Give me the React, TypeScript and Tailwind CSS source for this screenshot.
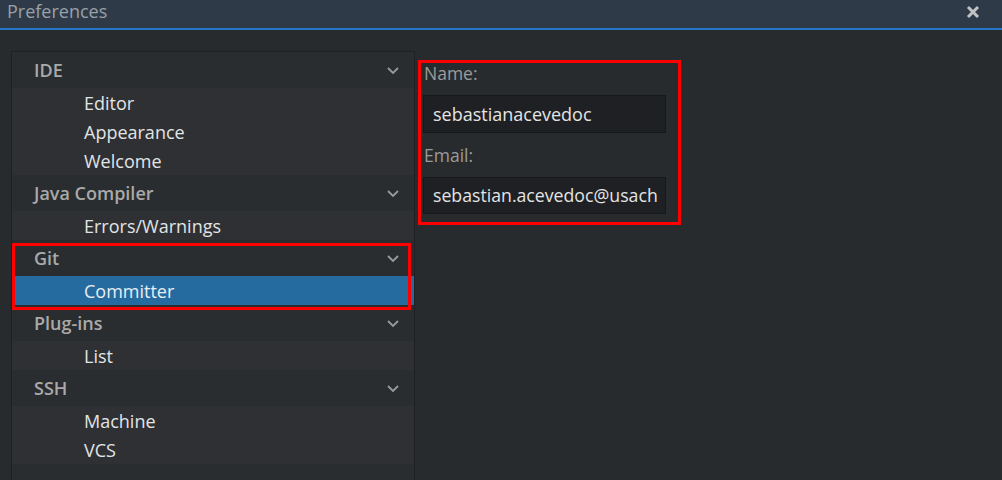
import React from "react";

const Chevron = () => (
  <svg width="12" height="7" viewBox="0 0 12 7" fill="none">
    <path d="M1 1 L6 6 L11 1" stroke="#9a9a9a" strokeWidth="1.8" />
  </svg>
);

type Group = { title: string; items: string[]; selected?: string; boxed?: boolean };

const groups: Group[] = [
  { title: "IDE", items: ["Editor", "Appearance", "Welcome"] },
  { title: "Java Compiler", items: ["Errors/Warnings"] },
  { title: "Git", items: ["Committer"], selected: "Committer", boxed: true },
  { title: "Plug-ins", items: ["List"] },
  { title: "SSH", items: ["Machine", "VCS"] },
];

export default function App() {
  return (
    <div
      className="w-[1002px] h-[480px] overflow-hidden bg-[#282b2e] flex flex-col"
      style={{ fontFamily: '"Open Sans", "Noto Sans", sans-serif' }}
    >
      <div className="h-[30px] shrink-0 bg-[#2e3a48] border-b-2 border-[#2577c9] flex items-start justify-between pl-[7px] pr-[22px]">
        <span className="text-[18px] text-[#9aa0a6] leading-none mt-[2px]">Preferences</span>
        <svg width="14" height="14" viewBox="0 0 14 14" className="mt-[5px]">
          <path d="M2 2 L12 12 M12 2 L2 12" stroke="#c2c2c2" strokeWidth="3" />
        </svg>
      </div>
      <div className="flex flex-1 pl-[11px] pt-[21px]">
        <div className="w-[404px] shrink-0 border border-[#1e2023] border-b-0 bg-[#2a2d30]">
          {groups.map((g) => (
            <div key={g.title} className="relative">
              <div className="h-[36px] flex items-center justify-between pl-[22px] pr-[15px] bg-[#2a2d30]">
                <span className="text-[18px] font-semibold text-[#a9a9a9]">{g.title}</span>
                <Chevron />
              </div>
              <div className="bg-[#2e3033]">
                {g.items.map((it) => (
                  <div
                    key={it}
                    className={
                      "h-[29px] flex items-center pl-[72px] pt-[2px] text-[18px] " +
                      (g.selected === it ? "bg-[#256b9f] text-[#e8eef3]" : "text-[#e2e4e6]")
                    }
                  >
                    {it}
                  </div>
                ))}
              </div>
              {g.boxed && (
                <div className="absolute z-10 top-[3px] left-0 right-[3px] -bottom-[5px] border-[3px] border-[#ff0000] pointer-events-none" />
              )}
            </div>
          ))}
        </div>
        <div className="ml-[3px] mt-[9px]">
          <div className="w-[263px] border-[3px] border-[#ff0000] pl-[2px] pt-[1px] pb-[8px] flex flex-col">
            <div className="h-[19px] flex items-center text-[17.5px] text-[#9b9b9b] pl-[1px]">Name:</div>
            <div className="mt-[12px] w-[243px] h-[38px] bg-[#1f2023] border border-[#17181a] flex items-center pl-[9px] overflow-hidden whitespace-nowrap text-[18px] text-[#e4e4e4]">
              sebastianacevedoc
            </div>
            <div className="mt-[12px] h-[20px] flex items-center text-[17.5px] text-[#9b9b9b] pl-[1px]">Email:</div>
            <div className="mt-[12px] w-[243px] h-[37px] bg-[#1f2023] border border-[#17181a] flex items-center pl-[9px] overflow-hidden whitespace-nowrap text-[17.7px] text-[#e4e4e4]">
              sebastian.acevedoc@usach
            </div>
          </div>
        </div>
      </div>
    </div>
  );
}
